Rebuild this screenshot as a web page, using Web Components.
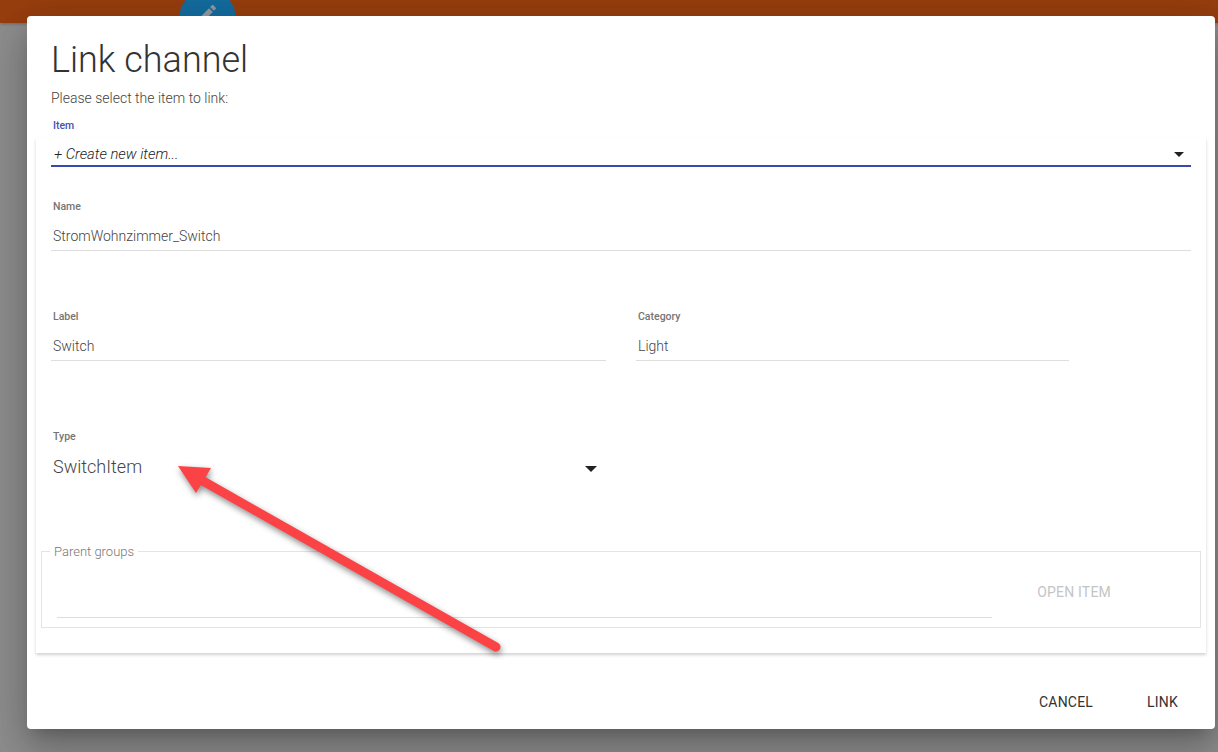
<!DOCTYPE html>
<html>
<head>
<meta charset="utf-8">
<title>Link channel</title>
<style>
    html, body { margin: 0; padding: 0; }
    body { font-family: Roboto, "Liberation Sans", sans-serif; }
</style>
</head>
<body>
<ls-app>
    <ls-dialog>
        <span slot="title">Link channel</span>
        <span slot="subtitle">Please select the item to link:</span>
        <ls-select label="Item" value="+ Create new item..."></ls-select>
        <ls-field style="margin-top:33px" label="Name" value="StromWohnzimmer_Switch"></ls-field>
        <ls-row style="margin-top:59px">
            <ls-field style="width:555px" label="Label" value="Switch"></ls-field>
            <ls-field style="width:433px;margin-left:30px" label="Category" value="Light"></ls-field>
        </ls-row>
        <ls-type style="margin-top:69px" label="Type" value="SwitchItem"></ls-type>
        <ls-groups style="margin-top:67px" legend="Parent groups"></ls-groups>
        <ls-button slot="actions" style="margin-right:54px">CANCEL</ls-button>
        <ls-button slot="actions">LINK</ls-button>
    </ls-dialog>
    <ls-arrow></ls-arrow>
</ls-app>

<script>
class LsApp extends HTMLElement {
    constructor() {
        super();
        this.attachShadow({ mode: 'open' });
        this.shadowRoot.innerHTML = `
            <style>
                :host {
                    display: block;
                    position: relative;
                    width: 1218px;
                    height: 752px;
                    overflow: hidden;
                    background: #8e8e8e;
                }
                .bar {
                    height: 23px;
                    background: #973e0e;
                    box-shadow: 0 1px 3px rgba(0,0,0,.25);
                }
                .fab {
                    position: absolute;
                    left: 179px;
                    top: -10px;
                    width: 57px;
                    height: 57px;
                    border-radius: 50%;
                    background: #146c9f;
                }
                .fab svg {
                    position: absolute;
                    left: 16px;
                    top: 12px;
                }
            </style>
            <div class="bar"></div>
            <div class="fab">
                <svg width="24" height="24" viewBox="0 0 24 24">
                    <path fill="#949a9e" d="M3 17.25V21h3.75L17.81 9.94l-3.75-3.75L3 17.25zM20.71 7.04a1 1 0 0 0 0-1.41l-2.34-2.34a1 1 0 0 0-1.41 0l-1.83 1.83 3.75 3.75 1.83-1.83z"/>
                </svg>
            </div>
            <slot></slot>
        `;
    }
}

class LsDialog extends HTMLElement {
    constructor() {
        super();
        this.attachShadow({ mode: 'open' });
        this.shadowRoot.innerHTML = `
            <style>
                :host {
                    display: flex;
                    flex-direction: column;
                    position: absolute;
                    left: 27px;
                    top: 16px;
                    width: 1188px;
                    height: 713px;
                    box-sizing: border-box;
                    padding-top: 22px;
                    background: #fff;
                    border-radius: 4px;
                    box-shadow: 0 11px 15px -7px rgba(0,0,0,.2), 0 24px 38px 3px rgba(0,0,0,.14), 0 9px 46px 8px rgba(0,0,0,.12);
                    color: #333;
                }
                h1 {
                    margin: 0 0 0 24px;
                    font: 300 36px/44px Roboto, sans-serif;
                    color: #333;
                }
                p {
                    margin: 7px 0 0 24px;
                    font: 300 14px/18px Roboto, sans-serif;
                    color: #444;
                }
                .card {
                    display: flow-root;
                    flex: none;
                    margin: 31px 9px 0;
                    height: 515px;
                    box-sizing: border-box;
                    background: #fff;
                    box-shadow: 0 2px 3px rgba(0,0,0,.18);
                }
                .actions {
                    display: flex;
                    justify-content: flex-end;
                    margin-top: 40px;
                    padding-right: 37px;
                }
            </style>
            <h1><slot name="title"></slot></h1>
            <p><slot name="subtitle"></slot></p>
            <div class="card"><slot></slot></div>
            <div class="actions"><slot name="actions"></slot></div>
        `;
    }
}

class LsSelect extends HTMLElement {
    constructor() {
        super();
        this.attachShadow({ mode: 'open' });
        this.shadowRoot.innerHTML = `
            <style>
                :host { display: block; }
                label {
                    display: block;
                    margin: -19px 0 5px 17px;
                    font: 500 10.5px/14px Roboto, sans-serif;
                    color: #3f51b5;
                }
                .control {
                    display: flex;
                    align-items: center;
                    justify-content: space-between;
                    margin: 0 15px;
                    height: 29px;
                    box-sizing: border-box;
                    padding: 4px 7px 0 3px;
                    border-bottom: 2px solid #3949ab;
                    font: italic 300 14.8px/20px Roboto, sans-serif;
                    color: #222;
                }
                i {
                    margin-top: 2px;
                    border-left: 5px solid transparent;
                    border-right: 5px solid transparent;
                    border-top: 5px solid #222;
                }
            </style>
            <label></label>
            <div class="control"><span></span><i></i></div>
        `;
        this.shadowRoot.querySelector('label').textContent = this.getAttribute('label');
        this.shadowRoot.querySelector('span').textContent = this.getAttribute('value');
    }
}

class LsRow extends HTMLElement {
    constructor() {
        super();
        this.attachShadow({ mode: 'open' });
        this.shadowRoot.innerHTML = `
            <style>
                :host { display: flex; margin-left: 15px; }
            </style>
            <slot></slot>
        `;
    }
}

class LsField extends HTMLElement {
    constructor() {
        super();
        this.attachShadow({ mode: 'open' });
        this.shadowRoot.innerHTML = `
            <style>
                :host { display: block; margin-left: 15px; margin-right: 15px; }
                :host-context(ls-row) { margin-right: 0; margin-left: 0; }
                label {
                    display: block;
                    padding-left: 2px;
                    font: 500 10.5px/14px Roboto, sans-serif;
                    color: #757575;
                }
                .value {
                    height: 36px;
                    box-sizing: border-box;
                    padding: 12px 0 0 2px;
                    font: 300 14px/20px Roboto, sans-serif;
                    color: #444;
                }
                .line { height: 1px; background: #dedede; }
            </style>
            <label></label>
            <div class="value"></div>
            <div class="line"></div>
        `;
        this.shadowRoot.querySelector('label').textContent = this.getAttribute('label');
        this.shadowRoot.querySelector('.value').textContent = this.getAttribute('value');
    }
}

class LsType extends HTMLElement {
    constructor() {
        super();
        this.attachShadow({ mode: 'open' });
        this.shadowRoot.innerHTML = `
            <style>
                :host { display: block; margin-left: 15px; width: 555px; height: 54px; }
                label {
                    display: block;
                    padding-left: 2px;
                    font: 500 10.5px/14px Roboto, sans-serif;
                    color: #757575;
                }
                .control {
                    display: flex;
                    align-items: center;
                    justify-content: space-between;
                    height: 24px;
                    margin-top: 11px;
                    padding: 0 9px 0 2px;
                    font: 300 18px/24px Roboto, sans-serif;
                    color: #444;
                }
                i {
                    margin-top: 4px;
                    border-left: 6px solid transparent;
                    border-right: 6px solid transparent;
                    border-top: 6px solid #222;
                }
            </style>
            <label></label>
            <div class="control"><span></span><i></i></div>
        `;
        this.shadowRoot.querySelector('label').textContent = this.getAttribute('label');
        this.shadowRoot.querySelector('span').textContent = this.getAttribute('value');
    }
}

class LsGroups extends HTMLElement {
    constructor() {
        super();
        this.attachShadow({ mode: 'open' });
        this.shadowRoot.innerHTML = `
            <style>
                :host {
                    display: block;
                    position: relative;
                    margin: 0 5px;
                    height: 77px;
                    box-sizing: border-box;
                    border: 1px solid #e4e4e4;
                }
                .legend {
                    position: absolute;
                    left: 8px;
                    top: -8px;
                    padding: 0 4px;
                    background: #fff;
                    font: 300 13px/16px Roboto, sans-serif;
                    color: #777;
                }
                .body {
                    display: flex;
                    align-items: flex-start;
                    padding: 0 89px 0 15px;
                    justify-content: space-between;
                }
                .input {
                    width: 935px;
                    height: 66px;
                    box-sizing: border-box;
                    border-bottom: 1px solid #dedede;
                }
                ls-button { margin-top: 31px; color: #c4c4c4; }
            </style>
            <div class="legend"></div>
            <div class="body">
                <div class="input"></div>
                <ls-button>OPEN ITEM</ls-button>
            </div>
        `;
        this.shadowRoot.querySelector('.legend').textContent = this.getAttribute('legend');
    }
}

class LsButton extends HTMLElement {
    constructor() {
        super();
        this.attachShadow({ mode: 'open' });
        this.shadowRoot.innerHTML = `
            <style>
                :host {
                    display: block;
                    font: 400 14px/18px Roboto, sans-serif;
                    letter-spacing: .2px;
                    cursor: pointer;
                }
            </style>
            <slot></slot>
        `;
    }
}

class LsArrow extends HTMLElement {
    constructor() {
        super();
        this.attachShadow({ mode: 'open' });
        this.shadowRoot.innerHTML = `
            <style>
                :host {
                    display: block;
                    position: absolute;
                    left: 0;
                    top: 0;
                    pointer-events: none;
                    filter: drop-shadow(1px 3px 3px rgba(0,0,0,.45));
                }
                svg { display: block; }
            </style>
            <svg width="1218" height="752" viewBox="0 0 1218 752">
                <path d="M203 481L496 647" stroke="#fb4245" stroke-width="9" stroke-linecap="round" fill="none"/>
                <path d="M178 466L211 468L196 493Z" fill="#fb4245"/>
            </svg>
        `;
    }
}

customElements.define('ls-app', LsApp);
customElements.define('ls-dialog', LsDialog);
customElements.define('ls-select', LsSelect);
customElements.define('ls-row', LsRow);
customElements.define('ls-field', LsField);
customElements.define('ls-type', LsType);
customElements.define('ls-groups', LsGroups);
customElements.define('ls-button', LsButton);
customElements.define('ls-arrow', LsArrow);
</script>
</body>
</html>
